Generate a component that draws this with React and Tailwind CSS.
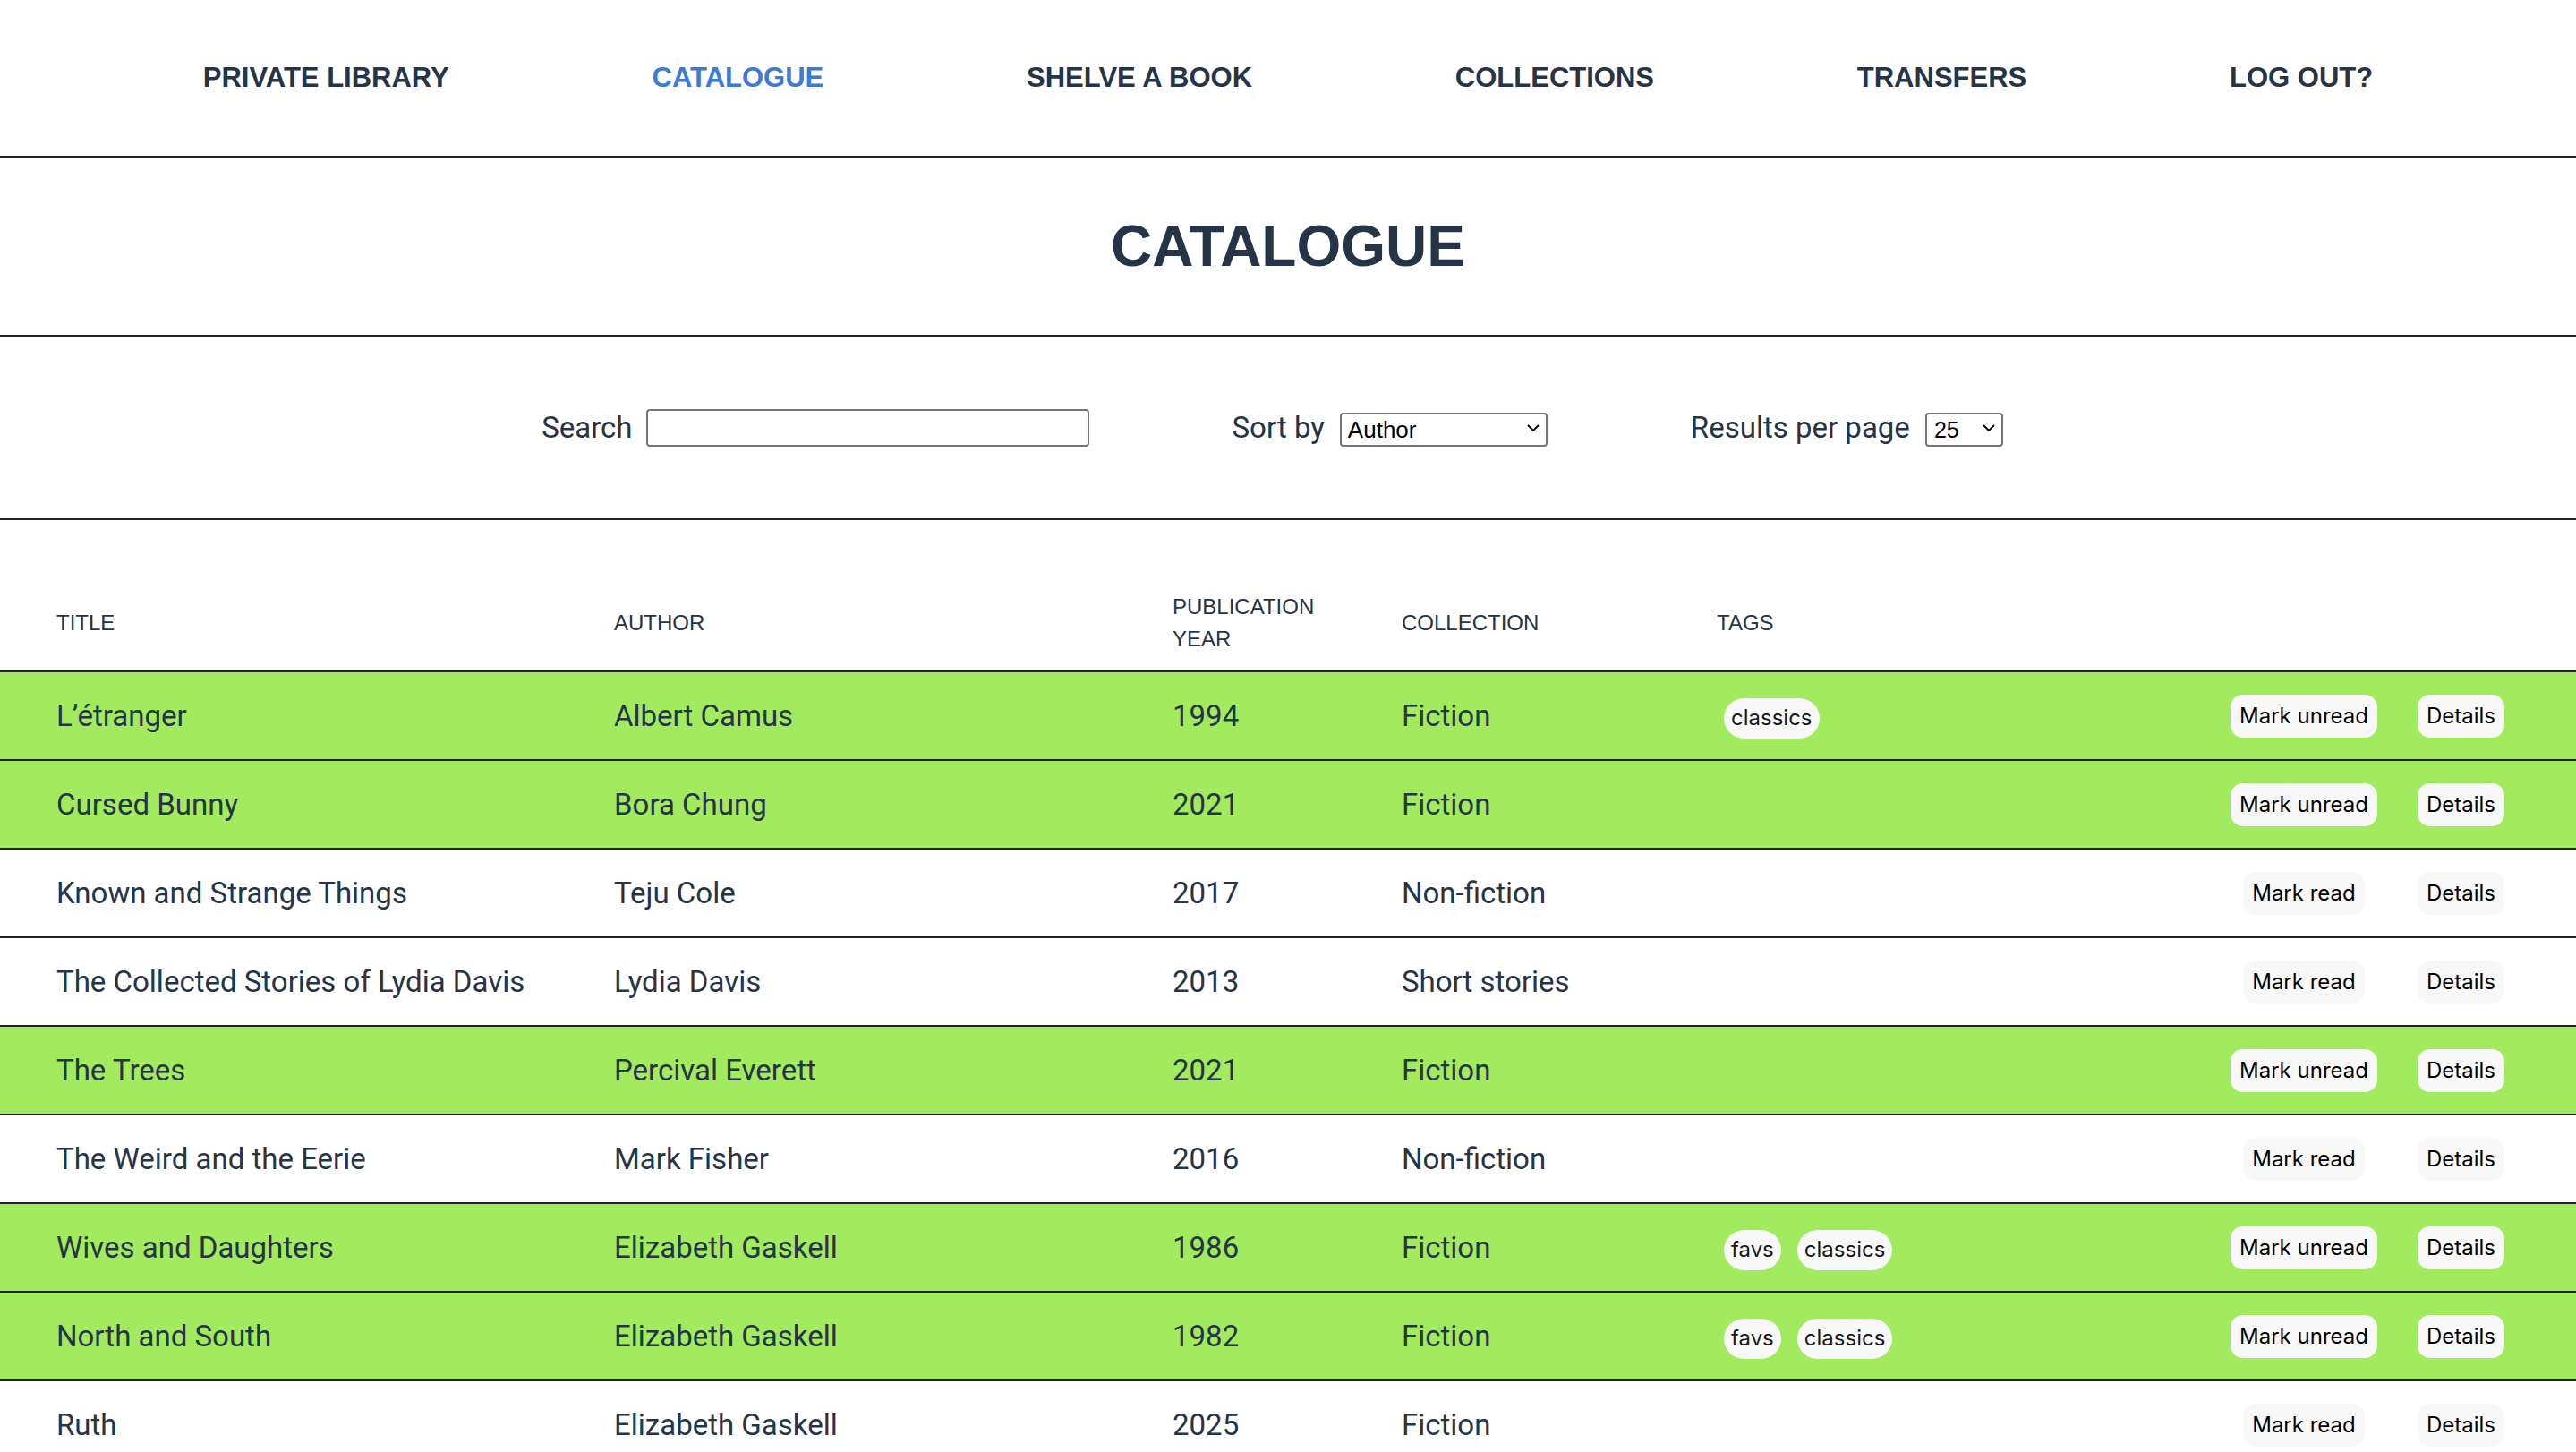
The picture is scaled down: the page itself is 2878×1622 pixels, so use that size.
import React from "react";

const rows = [
  { title: "L’étranger", author: "Albert Camus", year: "1994", collection: "Fiction", tags: ["classics"], read: true },
  { title: "Cursed Bunny", author: "Bora Chung", year: "2021", collection: "Fiction", tags: [], read: true },
  { title: "Known and Strange Things", author: "Teju Cole", year: "2017", collection: "Non-fiction", tags: [], read: false },
  { title: "The Collected Stories of Lydia Davis", author: "Lydia Davis", year: "2013", collection: "Short stories", tags: [], read: false },
  { title: "The Trees", author: "Percival Everett", year: "2021", collection: "Fiction", tags: [], read: true },
  { title: "The Weird and the Eerie", author: "Mark Fisher", year: "2016", collection: "Non-fiction", tags: [], read: false },
  { title: "Wives and Daughters", author: "Elizabeth Gaskell", year: "1986", collection: "Fiction", tags: ["favs", "classics"], read: true },
  { title: "North and South", author: "Elizabeth Gaskell", year: "1982", collection: "Fiction", tags: ["favs", "classics"], read: true },
  { title: "Ruth", author: "Elizabeth Gaskell", year: "2025", collection: "Fiction", tags: [], read: false },
  { title: "Mary Barton", author: "Elizabeth Gaskell", year: "1996", collection: "Fiction", tags: [], read: false },
];

const navItems = ["PRIVATE LIBRARY", "CATALOGUE", "SHELVE A BOOK", "COLLECTIONS", "TRANSFERS", "LOG OUT?"];

function Chevron() {
  return (
    <svg width="14" height="9" viewBox="0 0 14 9" fill="none" className="pointer-events-none absolute right-[9px] top-1/2 -translate-y-1/2">
      <path d="M1 1.5 L7 7.5 L13 1.5" stroke="#000" strokeWidth="1.8" />
    </svg>
  );
}

function Btn({ children }) {
  return (
    <button className="h-[48px] px-[10px] rounded-[14px] bg-[#f8f8f8] text-black font-['Inter',sans-serif] text-[24px] leading-none whitespace-nowrap">
      {children}
    </button>
  );
}

export default function App() {
  return (
    <div className="min-h-screen bg-white text-[#253446]">
      <nav className="h-[176px] border-b-2 border-[#222] flex items-center justify-evenly font-['Liberation_Sans',Arial,sans-serif] text-[31px] font-bold">
        {navItems.map((n) => (
          <a key={n} className={n === "CATALOGUE" ? "text-[#3c79d8]" : "text-[#253446]"}>
            {n}
          </a>
        ))}
      </nav>

      <div className="h-[200px] border-b-2 border-[#222] flex items-center justify-center">
        <h1 className="font-['Liberation_Sans',Arial,sans-serif] font-bold text-[64px] leading-none text-[#253446]">CATALOGUE</h1>
      </div>

      <div className="h-[205px] border-b-2 border-[#222] flex items-center justify-center gap-[160px] pr-[35px] font-['Roboto',sans-serif] text-[33px]">
        <label className="flex items-center gap-[15px]">
          <span>Search</span>
          <input className="w-[495px] h-[42px] border-2 border-[#767676] rounded-[4px] bg-white" />
        </label>
        <label className="flex items-center gap-[17px]">
          <span>Sort by</span>
          <span className="relative">
            <select className="appearance-none w-[232px] h-[38px] border-2 border-[#767676] rounded-[4px] bg-white pl-[7px] text-black font-['Liberation_Sans',Arial,sans-serif] text-[26px] leading-none">
              <option>Author</option>
              <option>Title</option>
              <option>Publication year</option>
            </select>
            <Chevron />
          </span>
        </label>
        <label className="flex items-center gap-[17px]">
          <span>Results per page</span>
          <span className="relative">
            <select className="appearance-none w-[87px] h-[38px] border-2 border-[#767676] rounded-[4px] bg-white pl-[8px] text-black font-['Liberation_Sans',Arial,sans-serif] text-[25px] leading-none">
              <option>25</option>
              <option>50</option>
              <option>100</option>
            </select>
            <Chevron />
          </span>
        </label>
      </div>

      <div className="grid grid-cols-[623px_624px_256px_352px_1fr_306px] items-center pl-[63px] pr-[80px] pt-[79px] pb-[17px] border-b-2 border-[#222] font-['Liberation_Sans',Arial,sans-serif] text-[24px] leading-[36px] uppercase">
        <div>Title</div>
        <div>Author</div>
        <div>
          Publication
          <br />
          Year
        </div>
        <div>Collection</div>
        <div>Tags</div>
        <div></div>
      </div>

      {rows.map((r) => (
        <div
          key={r.title}
          className={
            "grid grid-cols-[623px_624px_256px_352px_1fr_306px] items-center h-[99px] pl-[63px] pr-[80px] border-b-2 border-[#222] font-['Roboto',sans-serif] text-[33px] " +
            (r.read ? "bg-[#a2eb5e]" : "bg-white")
          }
        >
          <div className="whitespace-nowrap">{r.title}</div>
          <div>{r.author}</div>
          <div>{r.year}</div>
          <div>{r.collection}</div>
          <div className="flex items-center gap-[18px] ml-[8px] pt-[5px]">
            {r.tags.map((t) => (
              <span key={t} className="h-[45px] px-[8px] rounded-full bg-[#f8f8f8] text-[#1a1a1a] font-['Inter',sans-serif] text-[24px] leading-none flex items-center">
                {t}
              </span>
            ))}
          </div>
          <div className="flex items-center gap-[45px]">
            <div className="w-[164px] flex justify-center">
              <Btn>{r.read ? "Mark unread" : "Mark read"}</Btn>
            </div>
            <Btn>Details</Btn>
          </div>
        </div>
      ))}
    </div>
  );
}
